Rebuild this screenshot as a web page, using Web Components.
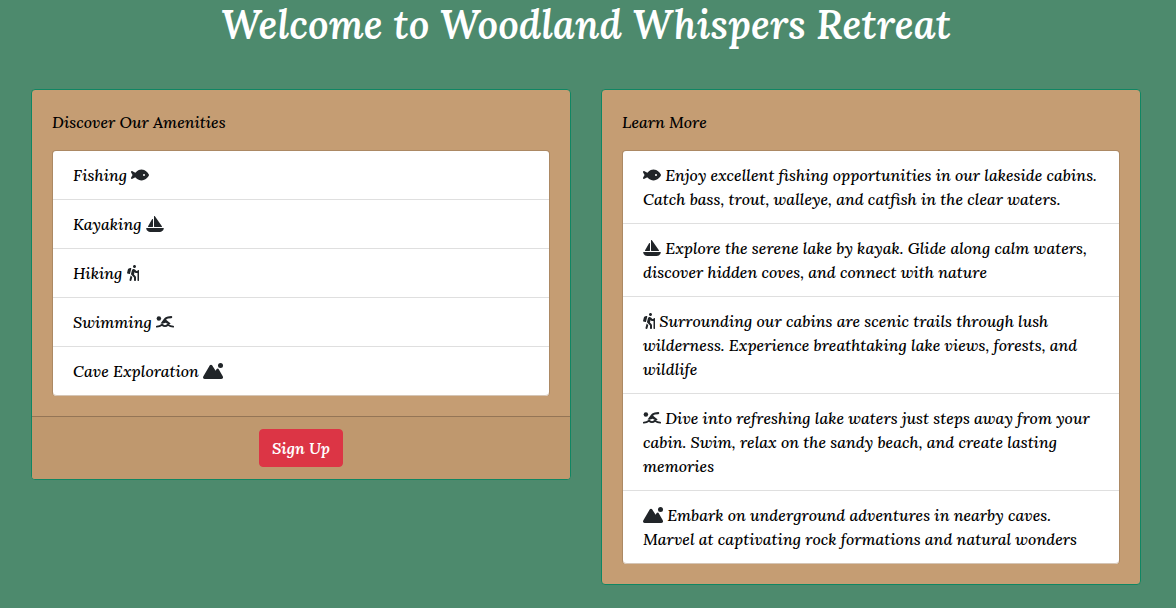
<!DOCTYPE html>
<html lang="en">
<head>
<meta charset="utf-8">
<meta name="viewport" content="width=device-width, initial-scale=1">
<title>Woodland Whispers Retreat</title>
<style>
body { margin: 0; background: #4d8a6d; color: #000; font: italic 500 16px/24px Lora, "Liberation Serif", serif; }
</style>
</head>
<body>
<retreat-page>
  <retreat-card heading="Discover Our Amenities">
    <retreat-list>
      <retreat-item>Fishing <retreat-icon name="fish"></retreat-icon></retreat-item>
      <retreat-item>Kayaking <retreat-icon name="sailboat"></retreat-icon></retreat-item>
      <retreat-item>Hiking <retreat-icon name="hiking"></retreat-icon></retreat-item>
      <retreat-item>Swimming <retreat-icon name="swimmer"></retreat-icon></retreat-item>
      <retreat-item>Cave Exploration <retreat-icon name="mountain"></retreat-icon></retreat-item>
    </retreat-list>
    <retreat-button slot="footer">Sign Up</retreat-button>
  </retreat-card>
  <retreat-card heading="Learn More">
    <retreat-list>
      <retreat-item><retreat-icon name="fish"></retreat-icon> Enjoy excellent fishing opportunities in our lakeside cabins. Catch bass, trout, walleye, and catfish in the clear waters.</retreat-item>
      <retreat-item><retreat-icon name="sailboat"></retreat-icon> Explore the serene lake by kayak. Glide along calm waters, discover hidden coves, and connect with nature</retreat-item>
      <retreat-item><retreat-icon name="hiking"></retreat-icon> Surrounding our cabins are scenic trails through lush wilderness. Experience breathtaking lake views, forests, and wildlife</retreat-item>
      <retreat-item><retreat-icon name="swimmer"></retreat-icon> Dive into refreshing lake waters just steps away from your cabin. Swim, relax on the sandy beach, and create lasting memories</retreat-item>
      <retreat-item><retreat-icon name="mountain"></retreat-icon> Embark on underground adventures in nearby caves. Marvel at captivating rock formations and natural wonders</retreat-item>
    </retreat-list>
  </retreat-card>
</retreat-page>
<script>
const icons = {
  fish: [576, '<path d="M180.500 141.500C219.700 108.500 272.600 80 336 80s116.300 28.500 155.500 61.500c39.100 33 66.900 72.400 81 99.800 4.700 9.200 4.700 20.100 0 29.300-14.100 27.400-41.900 66.800-81 99.800C452.300 403.500 399.400 432 336 432s-116.300-28.500-155.500-61.500c-16.200-13.700-30.500-28.500-42.700-43.100L48.100 379.600c-12.500 7.300-28.400 5.300-38.700-4.900S-3 348.700 4.200 336.100L50 256 4.200 175.900c-7.200-12.600-5-28.400 5.300-38.600s26.100-12.200 38.700-4.900l89.700 52.300c12.200-14.600 26.500-29.400 42.700-43.100zM448 256a32 32 0 1 0-64 0 32 32 0 1 0 64 0z"/>'],
  sailboat: [576, '<path d="M256 16c0-7 4.500-13.200 11.200-15.300s13.900.4 17.900 6.100l224 320c3.400 4.900 3.800 11.300 1.100 16.600s-8.200 8.600-14.200 8.600H272c-8.800 0-16-7.200-16-16V16zM212.100 96.500c7 1.900 11.900 8.200 11.900 15.500v224c0 8.800-7.200 16-16 16H80c-5.700 0-11-3-13.800-8s-2.900-11-.1-16l128-224c3.600-6.300 11-9.400 18-7.500zM5.700 404.300C2.800 394.100 10.500 384 21.100 384h533.700c10.600 0 18.300 10.100 15.400 20.300l-4 14.300C550.700 473.900 500.400 512 443 512H133C75.600 512 25.300 473.900 9.700 418.700z"/>'],
  hiking: [384, '<path d="M80.950 472.230c-4.280 17.160 6.140 34.530 23.280 38.810 2.610.66 5.220.95 7.800.95 14.330 0 27.370-9.700 31.020-24.230l25.240-100.970-52.780-52.780-34.560 138.220zm14.890-196.120L137 117c2.190-8.420-3.140-16.950-11.920-19.060-43.880-10.520-88.350 15.070-99.320 57.170L.49 253.240c-2.190 8.420 3.140 16.950 11.920 19.060l63.560 15.250c8.790 2.100 17.680-3.020 19.870-11.440zM368 160h-16c-8.840 0-16 7.160-16 16v16h-34.750l-46.780-46.780C243.380 134.110 228.610 128 212.910 128c-27.020 0-50.470 18.300-57.030 44.520l-26.920 107.720a32 32 0 0 0 8.420 30.390L224 397.250V480c0 17.670 14.330 32 32 32s32-14.330 32-32v-82.750c0-17.090-6.660-33.160-18.750-45.250l-46.820-46.820c.15-.5.490-.89.620-1.410l19.890-79.570 22.430 22.430c6 6 14.140 9.380 22.630 9.380h48v240c0 8.840 7.160 16 16 16h16c8.840 0 16-7.160 16-16V176c0-8.840-7.160-16-16-16zM240 96c26.510 0 48-21.490 48-48S266.510 0 240 0s-48 21.490-48 48 21.490 48 48 48z"/>'],
  swimmer: [576, '<circle cx="92" cy="140" r="72"/><path d="M322 182 470 302C440 330 410 330 384 318L322 284C270 280 240 318 192 312 170 308 155 305 140 312L238 179C270 125 315 88 375 76L485 64C530 62 535 128 490 134L384 147C355 152 338 164 322 182z"/><path d="M28 404C90 400 140 382 192 345 250 398 325 398 384 345 437 382 486 400 548 404" fill="none" stroke="currentColor" stroke-width="60" stroke-linecap="round" stroke-linejoin="round"/>'],
  mountain: [640, '<circle cx="560" cy="80" r="80"/><path d="M256 52c14 0 27 8 35 21l112 173 34-54c7-12 18-19 31-19s24 7 31 19l133 229c27 46-4 91-53 91H56C12 512-14 467 8 429L219 75c8-15 23-23 37-23z"/>']
};

class RetreatPage extends HTMLElement {
  constructor() {
    super();
    this.attachShadow({ mode: 'open' }).innerHTML = `
      <style>
        :host { display: block; padding: 0 35px 24px 31px; }
        h1 { margin: 0 0 39px; color: #fff; text-align: center; font-size: 40px; line-height: 50px; font-weight: 600; }
        main { display: grid; grid-template-columns: repeat(2, minmax(0, 1fr)); gap: 30px; align-items: start; }
        @media (max-width: 767px) { main { grid-template-columns: minmax(0, 1fr); } }
      </style>
      <h1>Welcome to Woodland Whispers Retreat</h1>
      <main><slot></slot></main>`;
  }
}

class RetreatCard extends HTMLElement {
  constructor() {
    super();
    this.attachShadow({ mode: 'open' }).innerHTML = `
      <style>
        :host { display: block; border: 1px solid #108663; border-radius: 4px; background: #c59d73; overflow: hidden; }
        section { padding: 20px; }
        h2 { margin: 0 0 16px; font-size: inherit; line-height: 24px; font-weight: inherit; }
        footer { padding: 12px 20px; border-top: 1px solid #947556; background: #bf986e; text-align: center; }
        footer[hidden] { display: none; }
      </style>
      <section><h2></h2><slot></slot></section>
      <footer><slot name="footer"></slot></footer>`;
  }
  connectedCallback() {
    this.shadowRoot.querySelector('h2').textContent = this.getAttribute('heading');
    const slot = this.shadowRoot.querySelector('slot[name="footer"]');
    const update = () => { slot.parentElement.hidden = slot.assignedElements().length === 0; };
    slot.addEventListener('slotchange', update);
    update();
  }
}

class RetreatList extends HTMLElement {
  constructor() {
    super();
    this.attachShadow({ mode: 'open' }).innerHTML = `
      <style>
        :host { display: block; border: 1px solid rgba(0,0,0,.125); border-bottom: 0; border-radius: 4px; background: #fff; background-clip: padding-box; }
      </style>
      <slot></slot>`;
    this.setAttribute('role', 'list');
  }
}

class RetreatItem extends HTMLElement {
  constructor() {
    super();
    this.attachShadow({ mode: 'open' }).innerHTML = `
      <style>
        :host { display: block; padding: 12px 20px; border-bottom: 1px solid #dfdfdf; }
        :host(:last-child) { border-bottom-color: #d5c5b5; border-radius: 0 0 4px 4px; }
      </style>
      <slot></slot>`;
    this.setAttribute('role', 'listitem');
  }
}

class RetreatIcon extends HTMLElement {
  constructor() {
    super();
    this.attachShadow({ mode: 'open' });
  }
  connectedCallback() {
    const [width, shapes] = icons[this.getAttribute('name')];
    this.shadowRoot.innerHTML = `
      <style>
        :host { display: inline-block; height: 16px; line-height: 16px; vertical-align: -2px; color: #212529; }
        svg { display: block; overflow: visible; fill: currentColor; }
      </style>
      <svg width="${width / 32}" height="16" viewBox="0 0 ${width} 512" aria-hidden="true">${shapes}</svg>`;
  }
}

class RetreatButton extends HTMLElement {
  constructor() {
    super();
    this.attachShadow({ mode: 'open' }).innerHTML = `
      <style>
        :host { display: block; }
        button { display: inline-block; vertical-align: top; padding: 6px 12px; border: 1px solid #dc3545; border-radius: 4px; background: #dc3545; color: #fff; font: inherit; font-weight: 600; line-height: 24px; cursor: pointer; }
        button:hover { background: #c82333; }
      </style>
      <button type="button"><slot></slot></button>`;
  }
}

customElements.define('retreat-page', RetreatPage);
customElements.define('retreat-card', RetreatCard);
customElements.define('retreat-list', RetreatList);
customElements.define('retreat-item', RetreatItem);
customElements.define('retreat-icon', RetreatIcon);
customElements.define('retreat-button', RetreatButton);
</script>
</body>
</html>
